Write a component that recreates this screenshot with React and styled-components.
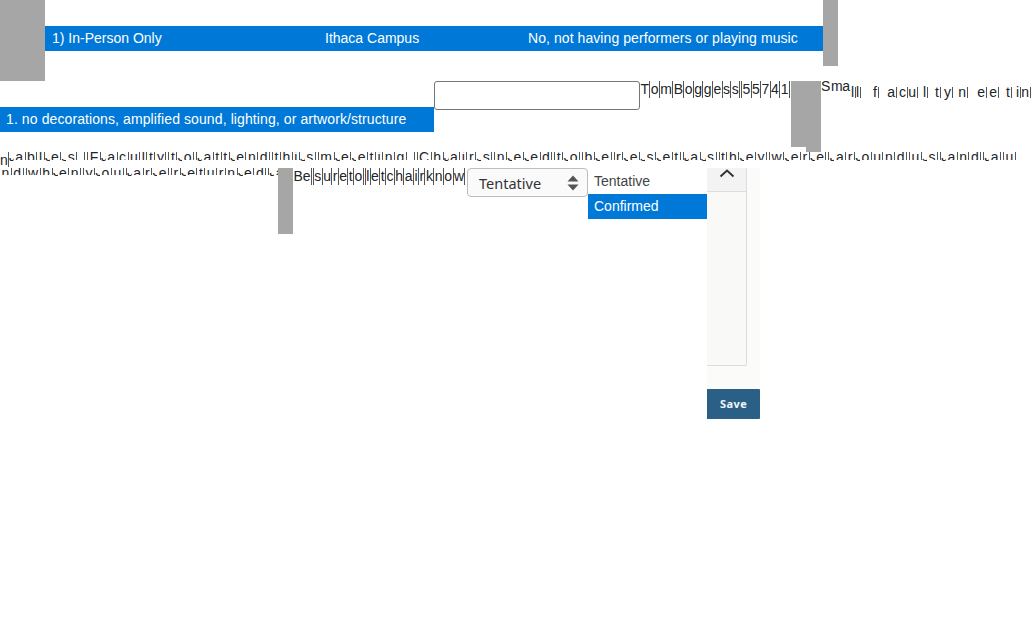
import React from 'react';
import styled, { createGlobalStyle } from 'styled-components';

const GlobalStyle = createGlobalStyle`
  html, body {
    margin: 0;
    padding: 0;
    background: #fff;
    overflow: hidden;
  }
  body {
    font-family: "Liberation Sans", Arial, sans-serif;
    font-size: 14px;
    color: #212529;
  }
`;

const Page = styled.div`
  width: 1034px;
  height: 637px;
  overflow: hidden;
`;

const Row = styled.div`
  display: flex;
  align-items: flex-start;
  height: ${(p) => p.$height}px;
`;

const GrayBlock = styled.div`
  flex: none;
  width: ${(p) => p.$width}px;
  height: ${(p) => p.$height}px;
  background: #a6a6a6;
  position: relative;

  ${(p) => p.$tail && `
    &::after {
      content: '';
      position: absolute;
      top: 100%;
      right: 0;
      width: 15px;
      height: 5px;
      background: #a6a6a6;
    }
  `}
`;

const BlueBar = styled.div`
  flex: none;
  margin-top: 26px;
  width: ${(p) => p.$width}px;
  height: 25px;
  background: #0078d7;
  color: #fff;
  line-height: 25px;
  display: grid;
  grid-template-columns: ${(p) => p.$columns};
`;

const BarCell = styled.div`
  padding-left: ${(p) => p.$pad}px;
  white-space: nowrap;
  letter-spacing: ${(p) => p.$track || 0}px;
`;

const TextBox = styled.input`
  flex: none;
  box-sizing: border-box;
  width: 206px;
  height: 29px;
  margin: 0;
  border: 1px solid #767676;
  border-radius: 3px;
  background: #fff;
`;

const Letters = styled.div`
  display: flex;
  flex: none;
  align-items: flex-start;
  width: ${(p) => p.$width}px;
`;

const Letter = styled.span`
  flex: none;
  height: 17px;
  line-height: 17px;
  padding: 0 ${(p) => p.$pad}px;
  border-right: 1px solid #555;
  white-space: pre;
`;

const Gap = styled.span`
  flex: none;
  width: ${(p) => p.$width}px;
  height: ${(p) => p.$height}px;
  border-right: 1px solid #555;
`;

const SpreadLetters = styled.div`
  display: flex;
  flex: none;
  align-items: flex-start;
  padding-top: 6px;
`;

const SpreadLetter = styled.span`
  flex: none;
  box-sizing: border-box;
  width: ${(p) => p.$width}px;
  height: 11px;
  line-height: 11px;
  text-align: right;
  padding-right: 1px;
  border-right: ${(p) => (p.$raised ? '0' : '1px solid #555')};
  position: relative;
  top: ${(p) => (p.$raised ? -6 : 0)}px;
`;

const SliceLine = styled.div`
  display: flex;
  flex: none;
  align-items: flex-start;
  width: ${(p) => p.$width}px;
  padding-top: ${(p) => p.$top}px;
  overflow: hidden;
`;

const Whole = styled.span`
  flex: none;
  height: 15px;
  line-height: 16px;
  border-right: 1px solid #555;
`;

const Head = styled.span`
  flex: none;
  height: ${(p) => p.$height}px;
  line-height: 16px;
  overflow: hidden;
  border-right: 1px solid #555;
  padding: 0 1.5px;

  & > span {
    display: block;
    margin-top: -3px;
  }
`;

const Foot = styled.span`
  flex: none;
  width: 5px;
  height: 3px;
  margin-top: ${(p) => p.$height - 2}px;
  overflow: hidden;
  line-height: 16px;

  & > span {
    display: block;
    margin-top: -10px;
  }
`;

const SelectBox = styled.div`
  flex: none;
  box-sizing: border-box;
  width: 121px;
  height: 29px;
  padding: 0 8px 0 11px;
  display: flex;
  align-items: center;
  justify-content: space-between;
  border: 1px solid #bdbdbd;
  border-radius: 4px;
  background: #fafafa;
  font-family: "Noto Sans", "Open Sans", sans-serif;
  font-size: 14.5px;
  color: #333;
`;

const OptionList = styled.div`
  flex: none;
  width: 119px;
  padding-top: 1px;
`;

const Option = styled.div`
  height: 25px;
  line-height: 25px;
  padding-left: 6px;
  background: ${(p) => (p.$selected ? '#0078d7' : '#fff')};
  color: ${(p) => (p.$selected ? '#fff' : '#444')};
`;

const SidePanel = styled.div`
  flex: none;
  width: 53px;
  display: flex;
  flex-direction: column;
`;

const PanelBody = styled.div`
  height: 221px;
  background: #fbfbf9;
`;

const Scroller = styled.div`
  box-sizing: border-box;
  width: 40px;
  height: 198px;
  background: #f9f9f7;
  border-right: 1px solid #ddd;
  border-bottom: 1px solid #ddd;
  border-radius: 0 0 2px 0;
`;

const ScrollHead = styled.div`
  height: 24px;
  background: #f3f3f3;
  border-bottom: 1px solid #ddd;
  display: flex;
  justify-content: center;
  padding-top: 1px;
  box-sizing: border-box;
`;

const SaveButton = styled.button`
  width: 53px;
  height: 30px;
  padding: 0 0 2px;
  border: 0;
  border-radius: 0 1px 1px 0;
  background: #2a6085;
  color: #f2f6f8;
  font-family: "Open Sans", sans-serif;
  font-size: 11px;
  font-weight: 700;
  letter-spacing: 0.4px;
`;

const ROUND = 'aeos';

const spreadCells = [
  ['S', 10, true], ['m', 11, true], ['a', 9, true],
  ['l', 5], ['l', 5], ['f', 18], ['a', 18], ['c', 11], ['u', 10], ['l', 10],
  ['t', 13], ['y', 12], ['n', 15], ['e', 19], ['e', 12], ['t', 13], ['i', 9], ['n', 10],
];

const nameCells = ['T', 'o', 'm', 'B', 'o', 'g', 'g', 'e', 's', 's', ' ', '5', '5', '7', '4', '1'];
const noteCells = ['Be', ' ', 's', 'u', 'r', 'e', 't', 'o', ' ', 'l', 'e', 't', 'c', 'h', 'a', 'i', 'r', 'k', 'n', 'o', 'w'];

const lineOne = 'ables. Faculty to attend this meeting. Chairs need to be reset as they were around us and a u';
const lineTwo = 'nd when you are returned a';

const Spaced = ({ cells, pad, width }) => (
  <Letters $width={width}>
    {cells.map((ch, i) =>
      ch === ' ' ? <Gap key={i} $width={1} $height={17} /> : <Letter key={i} $pad={pad}>{ch}</Letter>
    )}
  </Letters>
);

const Sliced = ({ text, height }) =>
  text.split('').map((ch, i) => {
    if (ch === ' ') return <Gap key={i} $width={2} $height={height} />;
    return (
      <React.Fragment key={i}>
        {ROUND.includes(ch) && <Foot $height={height}><span>{ch}</span></Foot>}
        <Head $height={height}><span>{ch}</span></Head>
      </React.Fragment>
    );
  });

export default function App() {
  return (
    <Page>
      <GlobalStyle />
      <Row $height={81}>
        <GrayBlock $width={45} $height={81} />
        <BlueBar $width={778} $columns="280px 203px 295px">
          <BarCell $pad={7}>1) In-Person Only</BarCell>
          <BarCell $pad={0}>Ithaca Campus</BarCell>
          <BarCell $pad={0} $track={0.07}>No, not having performers or playing music</BarCell>
        </BlueBar>
        <GrayBlock $width={15} $height={66} />
      </Row>

      <Row $height={69}>
        <BlueBar $width={434} $columns="1fr">
          <BarCell $pad={6} $track={0.1}>1. no decorations, amplified sound, lighting, or artwork/structure</BarCell>
        </BlueBar>
        <TextBox type="text" />
        <Spaced cells={nameCells} pad={0.38} width={151} />
        <GrayBlock $width={30} $height={66} $tail />
        <SpreadLetters>
          {spreadCells.map(([ch, w, raised], i) => (
            <SpreadLetter key={i} $width={w} $raised={raised}>{ch}</SpreadLetter>
          ))}
        </SpreadLetters>
      </Row>

      <Row $height={18}>
        <SliceLine $width={1034} $top={2}>
          <Whole>n</Whole>
          <Sliced text={lineOne} height={8} />
        </SliceLine>
      </Row>

      <Row $height={260}>
        <SliceLine $width={278} $top={0}>
          <Sliced text={lineTwo} height={7} />
        </SliceLine>
        <GrayBlock $width={15} $height={66} />
        <Spaced cells={noteCells} pad={0.42} width={174} />
        <SelectBox>
          Tentative
          <svg width="12" height="18" viewBox="0 0 12 18" aria-hidden="true">
            <path d="M6 1.5 L11.5 7.5 H0.5 Z M0.5 10.5 H11.5 L6 16.5 Z" fill="#555" />
          </svg>
        </SelectBox>
        <OptionList>
          <Option>Tentative</Option>
          <Option $selected>Confirmed</Option>
        </OptionList>
        <SidePanel>
          <PanelBody>
            <Scroller>
              <ScrollHead>
                <svg width="16" height="9" viewBox="0 0 16 9" aria-hidden="true">
                  <path d="M1.5 7.5 L8 1.5 L14.5 7.5" fill="none" stroke="#333" strokeWidth="2" />
                </svg>
              </ScrollHead>
            </Scroller>
          </PanelBody>
          <SaveButton>Save</SaveButton>
        </SidePanel>
      </Row>
    </Page>
  );
}
